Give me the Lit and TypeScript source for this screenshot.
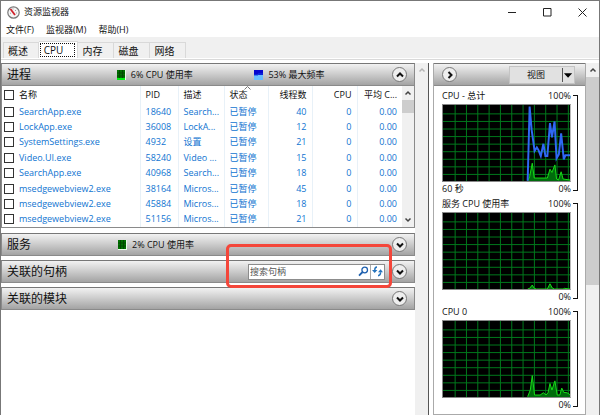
import { LitElement, html, css, svg, nothing } from "lit";
import { customElement, property } from "lit/decorators.js";

const PROCESSES = [
  ["SearchApp.exe", "18640", "Search...", "已暂停", "40", "0", "0.00"],
  ["LockApp.exe", "36008", "LockA...", "已暂停", "12", "0", "0.00"],
  ["SystemSettings.exe", "4932", "设置", "已暂停", "21", "0", "0.00"],
  ["Video.UI.exe", "58240", "Video ...", "已暂停", "15", "0", "0.00"],
  ["SearchApp.exe", "40968", "Search...", "已暂停", "18", "0", "0.00"],
  ["msedgewebview2.exe", "38164", "Micros...", "已暂停", "45", "0", "0.00"],
  ["msedgewebview2.exe", "45884", "Micros...", "已暂停", "18", "0", "0.00"],
  ["msedgewebview2.exe", "51156", "Micros...", "已暂停", "21", "0", "0.00"],
];

const chevron = (dir: "up" | "down" | "right") => {
  const d = { up: "M4 8.5 L7 5.5 L10 8.5", down: "M4 5.5 L7 8.5 L10 5.5", right: "M5.5 4 L8.5 7 L5.5 10" }[dir];
  return html`<svg width="14" height="14" viewBox="0 0 14 14" aria-hidden="true">
    <path d=${d} fill="none" stroke="#111" stroke-width="2"></path>
  </svg>`;
};

const scrollArrow = (dir: "up" | "down", color: string) => html`<svg width="8" height="8" viewBox="0 0 8 8" aria-hidden="true">
  <path d=${dir === "up" ? "M1.5 5.5 L4 3 L6.5 5.5" : "M1.5 2.5 L4 5 L6.5 2.5"} fill="none" stroke=${color} stroke-width="1.5"></path>
</svg>`;

@customElement("usage-graph")
export class UsageGraph extends LitElement {
  @property() heading = "";
  @property() span = "";
  @property() total = "";
  @property() load = "";

  static styles = css`
    :host { display: grid; grid-template-columns: 1fr 5px; column-gap: 2px; }
    .row { display: flex; justify-content: space-between; align-items: center; height: 17px; }
    .foot { height: 13px; }
    .plot { display: block; width: 100%; height: 78px; background: #000; border: 1px solid #888; border-right-color: #bbb; box-sizing: border-box; }
    .bracket { display: flex; flex-direction: column; justify-content: space-between; border-right: 1px solid #111; margin: 8px 0 4px; }
    .tick { height: 1px; background: #111; }
  `;

  render() {
    const cols = Array.from({ length: 11 }, (_, i) => 37 + i * 34.5);
    const rows = Array.from({ length: 9 }, (_, i) => 27 + i * 23);
    return html`
      <div>
        <div class="row"><span>${this.heading}</span><span>100%</span></div>
        <svg class="plot" viewBox="0 0 387 231" preserveAspectRatio="none" role="img" aria-label=${this.heading}>
          ${cols.map((x) => svg`<path d="M${x} 0V231" stroke="#007a1c" stroke-width="3"></path>`)}
          ${rows.map((y) => svg`<path d="M0 ${y}H387" stroke="#007a1c" stroke-width="3"></path>`)}
          <polygon points=${this.load + " 387,231 258,231"} fill="#006b0c"></polygon>
          <polyline points=${this.load} fill="none" stroke="#16dc16" stroke-width="3"></polyline>
          ${this.total ? svg`<polyline points=${this.total} fill="none" stroke="#2f68f5" stroke-width="6"></polyline>` : nothing}
        </svg>
        <div class="row foot"><span>${this.span}</span><span>0%</span></div>
      </div>
      <div class="bracket"><div class="tick"></div><div class="tick"></div></div>
    `;
  }
}

@customElement("app-root")
export class AppRoot extends LitElement {
  static styles = css`
    :host {
      display: block;
      font: 9px/12px "Open Sans", "Noto Sans CJK SC", sans-serif;
      color: #111;
      height: 100vh;
      overflow: hidden;
      background: #777;
    }
    * { box-sizing: border-box; }
    button { font: inherit; color: inherit; border: 0; padding: 0; background: none; }
    .window { display: flex; flex-direction: column; height: 100%; padding: 1px 1px 0; }
    .window > * { background: #fff; }
    .title { display: flex; align-items: center; height: 22px; padding: 0 7px 0 6px; }
    .title h1 { font-size: 9px; font-weight: 400; margin: 0 auto 0 4px; }
    .caption { display: flex; width: 35px; height: 22px; align-items: center; justify-content: center; }
    .close { width: 34px; margin-right: -7px; }
    .menu { display: flex; gap: 12px; height: 14px; align-items: center; padding-left: 5px; }
    .tabs { display: flex; align-items: flex-end; height: 22px; background: #f0f0f0; border-bottom: 1px solid #fff; padding-left: 2px; }
    .tab { width: 36px; height: 16px; border: 1px solid #d9d9d9; border-bottom: 0; border-left: 0; font-size: 10px; padding-right: 6px; }
    .tab:first-child { border-left: 1px solid #d9d9d9; }
    .active { width: 39px; height: 17px; background: #fff; padding: 1px 2px 1px 1px; }
    .active span { display: block; border: 1px dotted #111; height: 14px; line-height: 12px; padding-right: 8px; }
    .main { flex: 1; min-height: 0; display: flex; border-top: 1px solid #d9d9d9; padding-top: 3px; }
    .left { position: relative; flex: 1; min-width: 0; display: flex; flex-direction: column; gap: 4px; }
    .processes { margin-bottom: 1px; }
    .head {
      display: flex; align-items: center; height: 23px; padding: 0 7px 0 5px;
      background: linear-gradient(#f2f2f2, #cfcfcf 45%, #a3a3a3);
      border: 1px solid #8a8a8a; border-top-color: #777;
    }
    .head h2 { font-size: 12px; line-height: 16px; font-weight: 400; margin: 0; width: 111px; }
    .metric { display: flex; align-items: center; gap: 5px; width: 139px; }
    .spacer { flex: 1; }
    .round { width: 15px; height: 15px; border-radius: 50%; border: 1px solid #777; background: #eee; display: flex; align-items: center; justify-content: center; flex: none; }
    .round svg { flex: none; }
    .table-box { display: flex; height: 142px; border: 1px solid #8a8a8a; border-top: 0; }
    .table-wrap { flex: 1; min-width: 0; }
    table { width: 100%; height: 141px; table-layout: fixed; border-collapse: collapse; }
    th, td { padding: 0 5px; text-align: left; font-weight: 400; white-space: nowrap; border-right: 1px solid #e8f1f8; }
    thead tr { height: 18px; }
    td { color: #0f74d1; }
    .num { text-align: right; }
    th:first-child, td:first-child { padding-left: 2px; }
    th:last-child, td:last-child { border-right: 0; }
    td.clip { padding-right: 0; }
    .pid { width: 38px; } .desc { width: 46px; } .stat { width: 44px; } .avg { width: 45px; }
    .sorted { position: relative; }
    .sorted svg { position: absolute; top: 0; left: 19px; }
    label { display: flex; align-items: center; gap: 5px; }
    input[type="checkbox"] { appearance: none; width: 10px; height: 10px; margin: 0; border: 1px solid #333; background: #fff; flex: none; }
    .bar { width: 12px; background: #f0f0f0; display: flex; flex-direction: column; align-items: center; flex: none; }
    .bar svg { margin: 3px 0; flex: none; }
    .thumb { width: 100%; height: 13px; background: #cdcdcd; }
    .fill { flex: 1; }
    .search { display: flex; align-items: center; width: 137px; height: 16px; margin-right: 7px; background: #fff; border: 1px solid #8c8c8c; }
    .search input { flex: 1; min-width: 0; height: 14px; border: 0; outline: 0; padding: 0 1px; font: inherit; background: none; }
    .search input::placeholder { color: #555; opacity: 1; }
    .search button { display: flex; align-items: center; justify-content: center; width: 14px; height: 14px; }
    .search .refresh { border-left: 1px solid #aaa; }
    .callout { position: absolute; right: 23px; top: 181px; width: 166px; height: 44px; border: 3px solid #f4463a; border-radius: 5px; pointer-events: none; }
    .gutter { width: 13px; border-right: 1px solid #555; box-sizing: content-box; }
    .right { width: 153px; margin-left: 4px; border: 1px solid #aaa; border-top: 0; overflow: hidden; flex: none; }
    .right .head { margin: 0 -1px; padding: 0 10px 0 8px; }
    .view { display: flex; align-items: center; margin-left: auto; width: 66px; height: 18px; background: #e1e1e1; border: 1px solid #c4c4c4; }
    .view span { flex: 1; }
    .view svg { border-left: 1px solid #555; }
    .graphs { padding: 1px 7px 0 8px; }
    .outer .thumb { height: 208px; }
    .outer { width: 13px; }
  `;

  section(title: string, metrics: unknown, dir: "up" | "down", extra: unknown = nothing) {
    return html`<div class="head">
      <h2>${title}</h2>${metrics}<span class="spacer"></span>${extra}
      <button class="round" aria-label=${title}>${chevron(dir)}</button>
    </div>`;
  }

  cpuIcon(used: boolean) {
    return html`<svg width="9" height="10" viewBox="0 0 9 10" aria-hidden="true">
      <path d="M0 0H9V10H0Z" fill="#e8ffe8"></path><path d="M0 0H8V9H0Z" fill="#007100"></path>
      <path d="M2.5 0V9M5.5 0V9M0 3H8M0 6H8" stroke="#004800"></path>
      ${used ? svg`<path d="M0 8H8V10H0Z" fill="#00ef10"></path>` : nothing}
    </svg>`;
  }

  freqIcon() {
    return html`<svg width="9" height="10" viewBox="0 0 9 10" aria-hidden="true">
      <path d="M0 0H9V5H0Z" fill="#0505cf"></path>
      <path d="M0 5H9V10H0Z" fill="#69bdff"></path><path d="M0 5H4V4H9" fill="none" stroke="#123fe0"></path>
    </svg>`;
  }

  render() {
    return html`<div class="window">
      <header class="title">
        <svg width="13" height="13" viewBox="0 0 13 13" aria-hidden="true">
          <circle cx="6.5" cy="6.5" r="5.7" fill="#f4f4f4" stroke="#777" stroke-width="1.2"></circle>
          <path d="M3.5 3L8 9" stroke="#d0202a" stroke-width="1.8"></path>
          <path d="M3 7.5L4 7M9 4L8 5M10 7H9M6 2.4V3.4" stroke="#888" stroke-width=".8"></path>
        </svg>
        <h1>资源监视器</h1>
        <button class="caption" aria-label="最小化"><svg width="9" height="9" viewBox="0 0 9 9"><path d="M0 4.5H8" stroke="#222"></path></svg></button>
        <button class="caption" aria-label="最大化"><svg width="9" height="9" viewBox="0 0 9 9"><path d="M.5 .5H8V8H.5Z" fill="none" stroke="#222"></path></svg></button>
        <button class="caption close" aria-label="关闭"><svg width="9" height="9" viewBox="0 0 9 9"><path d="M.5 .5L8.5 8.5M8.5 .5L.5 8.5" stroke="#222"></path></svg></button>
      </header>
      <nav class="menu"><button>文件(F)</button><button>监视器(M)</button><button>帮助(H)</button></nav>
      <nav class="tabs">
        <button class="tab">概述</button><button class="tab active"><span>CPU</span></button>
        <button class="tab">内存</button><button class="tab">磁盘</button><button class="tab">网络</button>
      </nav>
      <main class="main">
        <section class="left">
          <div class="processes">
            ${this.section("进程", html`
              <span class="metric">${this.cpuIcon(true)}6% CPU 使用率</span>
              <span class="metric">${this.freqIcon()}53% 最大频率</span>`, "up")}
            <div class="table-box">
              <div class="table-wrap"><table>
                <thead><tr>
                  <th><label><input type="checkbox" />名称</label></th>
                  <th class="pid">PID</th><th class="desc">描述</th>
                  <th class="stat sorted">状态<svg width="7" height="4" viewBox="0 0 7 4" aria-hidden="true"><path d="M.5 3.5L3.5 .5L6.5 3.5" fill="none" stroke="#777"></path></svg></th>
                  <th class="num stat">线程数</th><th class="num avg">CPU</th><th class="num avg">平均 C...</th>
                </tr></thead>
                <tbody>
                  ${PROCESSES.map(([name, ...cells]) => html`<tr>
                    <td><label><input type="checkbox" />${name}</label></td>
                    ${cells.map((c, i) => html`<td class=${i > 2 ? "num" : i === 1 ? "clip" : ""}>${c}</td>`)}
                  </tr>`)}
                </tbody>
              </table></div>
              <div class="bar">${scrollArrow("up", "#444")}<div class="thumb"></div><div class="fill"></div>${scrollArrow("down", "#444")}</div>
            </div>
          </div>
          ${this.section("服务", html`<span class="metric">${this.cpuIcon(false)}2% CPU 使用率</span>`, "down")}
          ${this.section("关联的句柄", nothing, "down", html`<div class="search">
            <input type="text" placeholder="搜索句柄" aria-label="搜索句柄" />
            <button aria-label="搜索"><svg width="11" height="11" viewBox="0 0 11 11"><circle cx="6.7" cy="4" r="2.8" fill="none" stroke="#1d5fae" stroke-width="1.3"></circle><path d="M4.6 6L1 9.6" stroke="#1d5fae" stroke-width="1.8"></path></svg></button>
            <button class="refresh" aria-label="刷新"><svg width="11" height="11" viewBox="0 0 11 11"><path d="M5 1Q2.7 1 2.7 4.5M6 9.7Q8.6 9.7 8.6 6.3" fill="none" stroke="#2473bd" stroke-width="1.4"></path><path d="M0 4H5.4L2.7 7ZM6 6.3H11L8.6 3.3Z" fill="#2473bd"></path></svg></button>
          </div>`)}
          ${this.section("关联的模块", nothing, "down")}
          <div class="callout"></div>
        </section>
        <div class="bar gutter">${scrollArrow("up", "#b5b5b5")}</div>
        <aside class="right">
          <div class="head">
            <button class="round" aria-label="折叠">${chevron("right")}</button>
            <button class="view"><span>视图</span><svg width="12" height="14" viewBox="0 0 12 14"><path d="M1 5H10L5.5 10Z" fill="#000"></path></svg></button>
          </div>
          <div class="graphs">
            <usage-graph heading="CPU - 总计" span="60 秒"
              total="258,230 264,5 270,75 275,110 279,140 286,129 291,137 298,155 306,118 312,155 318,155 326,55 332,98 340,50 346,162 353,150 360,86 368,165 373,153 387,153"
              load="258,230 264,218 272,177 278,222 318,222 326,195 332,205 341,182 346,225 352,228 360,203 366,225 387,228"></usage-graph>
            <usage-graph heading="服务 CPU 使用率"
              load="258,231 264,229 272,219 278,229 285,231 318,231 326,215 333,228 340,231 366,231 370,229 387,231"></usage-graph>
            <usage-graph heading="CPU 0"
              load="258,230 266,210 272,166 279,225 296,225 306,218 314,225 320,218 326,190 332,210 341,182 348,225 356,225 362,204 368,217 378,218 387,224"></usage-graph>
          </div>
        </aside>
        <div class="bar outer">${scrollArrow("up", "#444")}<div class="thumb"></div></div>
      </main>
    </div>`;
  }
}
